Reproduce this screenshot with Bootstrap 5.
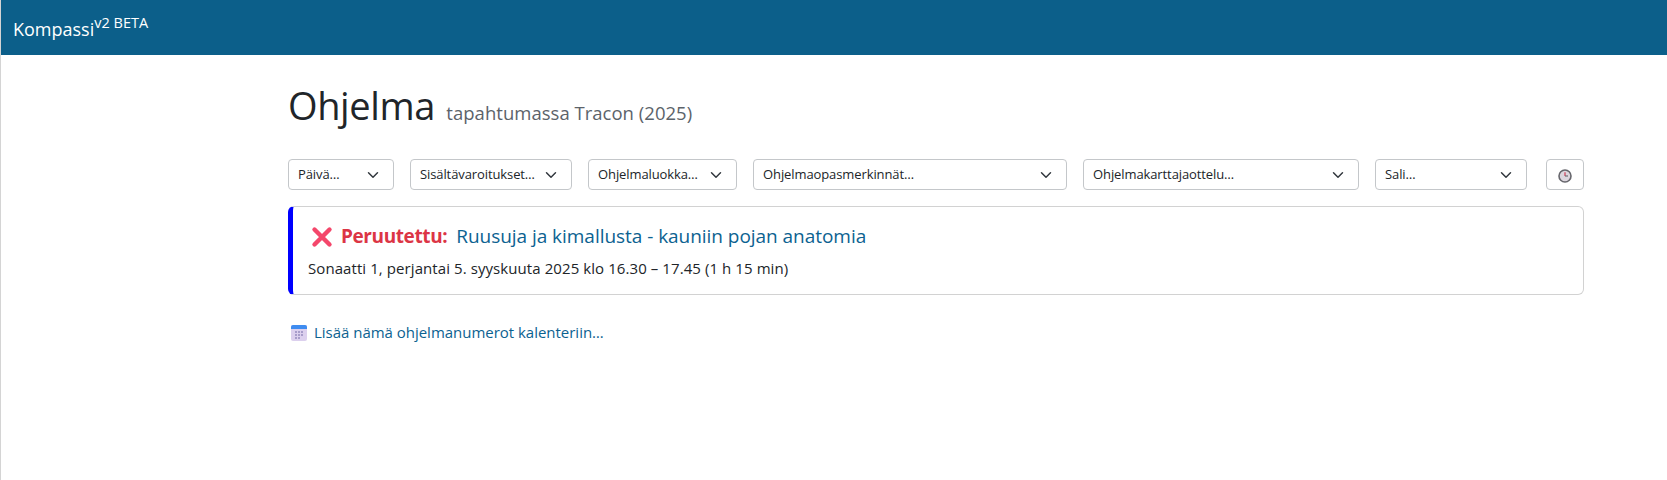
<!DOCTYPE html>
<html lang="fi">
<head>
    <meta charset="UTF-8">
    <meta name="viewport" content="width=device-width, initial-scale=1">
    <title>Ohjelma - Kompassi</title>
    <link href="https://cdn.jsdelivr.net/npm/bootstrap@5.3.3/dist/css/bootstrap.min.css" rel="stylesheet">
    <style>
        body { font-family: "Open Sans", "Noto Sans", sans-serif; color: #212529; min-height: 480px; border-left: 1px solid #d4d4d4; }
        .top-bar { background: #0c5f8a; height: 55px; padding: 0 12px; align-items: flex-start; }
        .top-brand { color: #fff; font-size: 18px; line-height: 27px; padding-top: 16px; text-decoration: none; }
        .top-brand sup { font-size: 14.5px; top: -0.55em; }
        .page-wrap { width: 1296px; margin-left: 287px; }
        .page-title { font-size: 38px; line-height: 48px; font-weight: 400; margin: 0; padding-top: 26px; letter-spacing: -0.4px; }
        .page-title small { font-size: 18.5px; color: #5c636a; margin-left: 2px; font-weight: 400; letter-spacing: 0.02px; }
        .filter-row { margin-top: 22px; }
        .filter-row .form-select { height: 31px; font-size: 13px; letter-spacing: -0.1px; border-color: #c4c7ca; padding-left: 9px; background-position: right 12px center; flex: none; margin-right: 16px; }
        .w-day { width: 106px; } .w-warn { width: 162px; } .w-cat { width: 149px; } .w-tag { width: 314px; }
        .w-map { width: 276px; } .filter-row .w-room { width: 152px; margin-right: 19px; }
        .time-btn { width: 38px; height: 31px; padding: 0; border: 1px solid #c4c7ca; border-radius: 4px; background: #fff; }
        .prog-card { margin-top: 16px; height: 89px; border-color: #d2d2d2; border-left: 5px solid #0000ff; }
        .prog-card .card-body { padding: 16px 14px; }
        .prog-title { font-size: 19px; line-height: 27px; margin: 0 0 8px 4px; font-weight: 400; display: flex; align-items: center; }
        .prog-cancel { color: #dc3545; font-weight: 700; margin: 0 9px 0 8px; letter-spacing: -0.4px; }
        .prog-title a, .cal-link a { color: #0c6291; text-decoration: none; }
        .prog-title a { letter-spacing: -0.04px; }
        .prog-meta { font-size: 15px; line-height: 21px; color: #212529; margin: 0 0 0 1px; letter-spacing: 0.08px; }
        .cal-link { margin-top: 27px; font-size: 15px; line-height: 21px; display: flex; align-items: center; gap: 7px; padding-left: 3px; letter-spacing: -0.02px; }
    </style>
</head>
<body>
<nav class="navbar top-bar">
    <a class="top-brand" href="#">Kompassi<sup>v2 BETA</sup></a>
</nav>

<div class="page-wrap">
    <h1 class="page-title">Ohjelma <small>tapahtumassa Tracon (2025)</small></h1>

    <!-- suodattimet -->
    <div class="d-flex filter-row">
        <select class="form-select form-select-sm w-day"><option>Päivä…</option></select>
        <select class="form-select form-select-sm w-warn"><option>Sisältävaroitukset…</option></select>
        <select class="form-select form-select-sm w-cat"><option>Ohjelmaluokka…</option></select>
        <select class="form-select form-select-sm w-tag"><option>Ohjelmaopasmerkinnät…</option></select>
        <select class="form-select form-select-sm w-map"><option>Ohjelmakarttajaottelu…</option></select>
        <select class="form-select form-select-sm w-room"><option>Sali…</option></select>
        <button class="time-btn" type="button" aria-label="Aika">
            <svg width="14" height="14" viewBox="0 0 14 14"><circle cx="7" cy="7" r="6" fill="#dcd6de" stroke="#66666c" stroke-width="1.6"/><path d="M7 3.2V7" stroke="#d0304a" stroke-width="1.1"/><path d="M7 7h3" stroke="#66666c" stroke-width="1.1"/></svg>
        </button>
    </div>

    <div class="card prog-card">
        <div class="card-body">
            <h2 class="prog-title">
                <svg width="22" height="22" viewBox="0 0 22 22"><path d="M3.5 3.5l15 15M18.5 3.5l-15 15" stroke="#f4476b" stroke-width="4.4" stroke-linecap="round"/></svg>
                <span class="prog-cancel">Peruutettu:</span>
                <a href="#">Ruusuja ja kimallusta - kauniin pojan anatomia</a>
            </h2>
            <p class="prog-meta">Sonaatti 1, perjantai 5. syyskuuta 2025 klo 16.30 – 17.45 (1 h 15 min)</p>
        </div>
    </div>

    <div class="cal-link">
        <svg width="16" height="17" viewBox="0 0 16 17"><rect x="0" y="1" width="16" height="16" rx="2" fill="#dcd0ee"/><path d="M0 5V3a2 2 0 0 1 2-2h12a2 2 0 0 1 2 2v2z" fill="#3f8cf0"/><g fill="#a79dca"><rect x="4" y="7" width="2" height="2"/><rect x="7" y="7" width="2" height="2"/><rect x="10" y="7" width="2" height="2"/><rect x="4" y="10" width="2" height="2"/><rect x="7" y="10" width="2" height="2"/><rect x="10" y="10" width="2" height="2"/><rect x="4" y="13" width="2" height="2"/><rect x="7" y="13" width="2" height="2"/></g></svg>
        <a href="#">Lisää nämä ohjelmanumerot kalenteriin…</a>
    </div>
</div>

<script src="https://cdn.jsdelivr.net/npm/bootstrap@5.3.3/dist/js/bootstrap.bundle.min.js"></script>
</body>
</html>
